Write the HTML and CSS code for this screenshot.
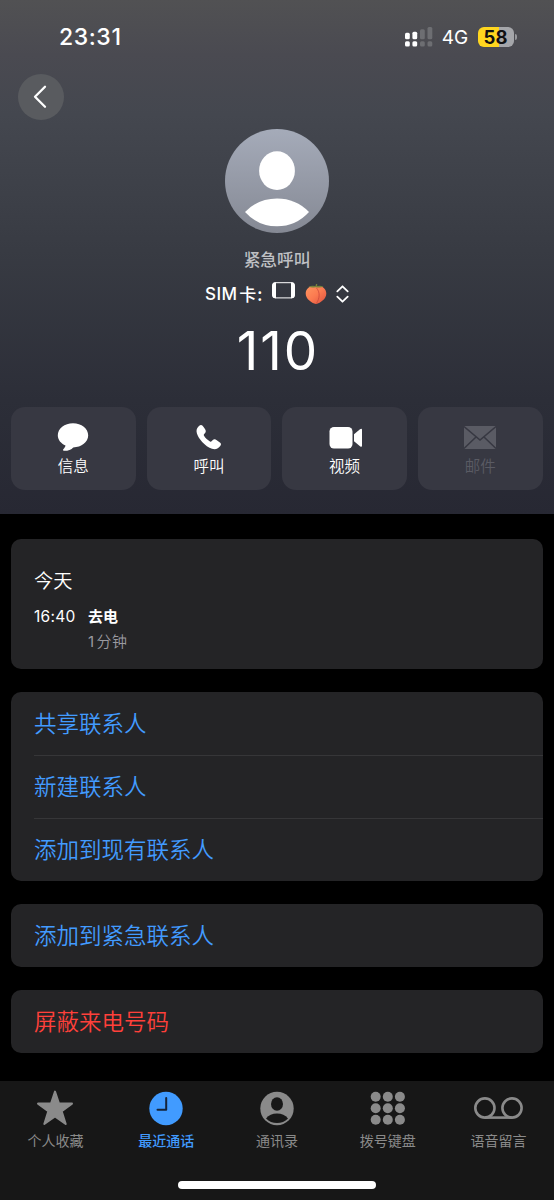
FILE: index.html
```html
<!DOCTYPE html>
<html lang="zh-CN">
<head>
<meta charset="utf-8">
<title>紧急呼叫</title>
<link rel="stylesheet" href="styles.css">
</head>
<body>
<div class="screen">
  <header class="hero">
    <div class="status">
      <span class="clock">23:31</span>
      <div class="status-right">
        <svg class="signal" width="28" height="20" viewBox="0 0 28 20">
          <g fill="#fff"><rect x="0" y="5.8" width="4.8" height="6.4" rx="1.5"/><rect x="0" y="14.2" width="4.8" height="5.2" rx="1.5"/><rect x="7.4" y="4.8" width="4.8" height="7.4" rx="1.5"/><rect x="7.4" y="14.2" width="4.8" height="5.2" rx="1.5"/></g>
          <g fill="#6d6e72"><rect x="15" y="2.2" width="4.8" height="10" rx="1.5"/><rect x="15" y="14.2" width="4.8" height="5.2" rx="1.5"/><rect x="22.5" y="0" width="4.8" height="12.2" rx="1.5"/><rect x="22.5" y="14.2" width="4.8" height="5.2" rx="1.5"/></g>
        </svg>
        <span class="network">4G</span>
        <div class="battery"><span class="battery-level">58</span><i class="nub"></i></div>
      </div>
    </div>
    <div class="nav">
      <button class="back" aria-label="返回">
        <svg width="46" height="46" viewBox="0 0 46 46"><path d="M27 12.800 17 22.800l10 10" fill="none" stroke="#fff" stroke-width="2.300" stroke-linecap="round" stroke-linejoin="round"/></svg>
      </button>
    </div>
    <svg class="avatar" width="104" height="104" viewBox="0 0 104 104">
      <defs><linearGradient id="avatarFill" x1="0" y1="0" x2="0" y2="1"><stop offset="0" stop-color="#a5abb9"/><stop offset="1" stop-color="#858994"/></linearGradient></defs>
      <circle cx="52" cy="52" r="52" fill="url(#avatarFill)"/>
      <ellipse cx="52" cy="41.700" rx="17.900" ry="19.400" fill="#fff"/>
      <path d="M20 83Q33 69.500 52 69.500T84 83Q71 97.300 52 97.300T20 83Z" fill="#fff"/>
    </svg>
    <div class="name">紧急呼叫</div>
    <div class="sim">
      <span class="sim-latin">SIM</span><span class="sim-label">卡:</span>
      <svg class="sim-icon" width="23" height="17" viewBox="0 0 23 17"><rect x=".7" y=".7" width="21.600" height="15.200" rx="3" fill="none" stroke="#fff" stroke-width="1"/><path d="M4 0.200H3Q0 .4 0 4v8.500Q0 16 3 16.300H4ZM19 .2h1q3 .2 3 3.800v8.500q0 3.500-3 3.800H19Z" fill="#fff"/></svg>
      <svg class="peach" width="22" height="22" viewBox="0 0 22 22">
        <defs><linearGradient id="peachFill" x1="0" y1="0" x2="1" y2="1"><stop offset="0" stop-color="#ff9560"/><stop offset=".5" stop-color="#fb7a50"/><stop offset="1" stop-color="#dc503f"/></linearGradient></defs>
        <path d="M11 4C7 1.700 .7 4.500 .7 10.500c0 5.500 5.600 9.300 10.300 10.500 4.700-1.200 10.300-5 10.300-10.500C21.300 4.500 15 1.700 11 4Z" fill="url(#peachFill)"/>
        <path d="M11.500 5c3.500 4 3.600 10-.2 15.500" fill="none" stroke="#cc493b" stroke-width=".8"/>
        <path d="M10.500 4.200Q6.500 5 3.500 3.800 6.500 2 10.500 3.100L11 1h1.200v2.100Q15.500 2 18.500 3.800 15.500 5 12 4.400Z" fill="#77803c"/>
      </svg>
      <svg class="sort" width="13" height="18" viewBox="0 0 13 18"><path d="M1.300 6.300 6.500 1.300l5.200 5M1.300 11.700l5.200 5 5.200-5" fill="none" stroke="#fff" stroke-width="1.800" stroke-linecap="round" stroke-linejoin="round"/></svg>
    </div>
    <div class="number">110</div>
    <div class="actions">
      <div class="action">
        <svg width="32" height="30" viewBox="0 0 32 30"><path d="M16 1.200C24.500 1.200 31.200 6.500 31.200 13.300S24.500 25.400 16.200 25.400C14.500 27.500 11 28.800 7.600 28.800 6 28.800 5.500 28 6.500 27 7.500 26 8.300 25 8.500 23.600 4 21.500.8 18 .8 13.300.8 6.500 7.500 1.200 16 1.200Z" fill="#fff"/></svg>
        <span>信息</span>
      </div>
      <div class="action">
        <svg width="32" height="30" viewBox="0 0 32 30"><path d="M4.200 6.200C5.300 4.500 6.700 3.100 8 3c1.200 0 2 1.100 3.300 3 1.600 2.400 2 3.600.8 5l-1.100 1.300c-.4.500-.3 1 0 1.500 1.300 2.200 3.800 4.500 6 5.700.6.400 1.100.3 1.600-.2l1.200-1.200c1.300-1.300 2.700-.8 5 .8 2.100 1.400 3.300 2.200 3.200 3.400-.1 1.400-1.400 2.900-3.200 4-3.600 2.100-8.800.3-13.500-4.300C5.500 16.500 2 10 4.200 6.200Z" fill="#fff"/></svg>
        <span>呼叫</span>
      </div>
      <div class="action">
        <svg width="34" height="30" viewBox="0 0 34 30"><rect x="1.500" y="5" width="23" height="21.500" rx="4.500" fill="#fff"/><path d="M26 12.300 32 7.300Q34 6 34 8v15.500q0 2-2 .7l-6-5Z" fill="#fff"/></svg>
        <span>视频</span>
      </div>
      <div class="action action-off">
        <svg width="32" height="30" viewBox="0 0 32 30"><rect x="0" y="4" width="32" height="23" rx="1" fill="#5a5b64"/><path d="M0 4.500 16 18 32 4.500M0 26.500 12 15M32 26.500 20 15" fill="none" stroke="#373842" stroke-width="1.600"/></svg>
        <span>邮件</span>
      </div>
    </div>
  </header>

  <main class="content">
    <section class="card log">
      <h2>今天</h2>
      <div class="log-grid">
        <span class="log-time">16:40</span><span class="log-type">去电</span>
        <span class="log-length"><b>1</b>分钟</span>
      </div>
    </section>
    <section class="card list">
      <a class="item">共享联系人</a>
      <a class="item">新建联系人</a>
      <a class="item">添加到现有联系人</a>
    </section>
    <section class="card list"><a class="item">添加到紧急联系人</a></section>
    <section class="card list"><a class="item danger">屏蔽来电号码</a></section>
  </main>

  <footer class="footer">
    <nav class="tabs">
      <a class="tab"><svg width="38" height="36" viewBox="0 0 38 36"><path d="M19 1.600 23 13.500 36 13.600 25.700 21.300 29.700 34 19 26.400 8.300 34 12.300 21.300 2 13.600 15 13.500Z" fill="#8a8a8a" stroke="#8a8a8a" stroke-width="2" stroke-linejoin="round"/></svg><span>个人收藏</span></a>
      <a class="tab active"><svg width="34" height="36" viewBox="0 0 34 36"><circle cx="17" cy="18.500" r="16.700" fill="#419bff"/><path d="M17.200 8V19.700H8.500" fill="none" stroke="#15243a" stroke-width="2" stroke-linecap="round" stroke-linejoin="round"/></svg><span>最近通话</span></a>
      <a class="tab"><svg width="34" height="36" viewBox="0 0 34 36"><circle cx="17" cy="18.500" r="16.700" fill="#8a8a8a"/><ellipse cx="17" cy="14" rx="6" ry="6.700" fill="#171717"/><path d="M6 28.500Q10 23.500 17 23.500T28 28.500Q23.500 33 17 33T6 28.500Z" fill="#171717"/></svg><span>通讯录</span></a>
      <a class="tab"><svg width="36" height="36" viewBox="0 0 36 36"><g fill="#8a8a8a"><circle cx="5.700" cy="6.800" r="5"/><circle cx="17.800" cy="6.800" r="5"/><circle cx="29.900" cy="6.800" r="5"/><circle cx="5.700" cy="18.300" r="5"/><circle cx="17.800" cy="18.300" r="5"/><circle cx="29.900" cy="18.300" r="5"/><circle cx="5.700" cy="29.800" r="5"/><circle cx="17.800" cy="29.800" r="5"/><circle cx="29.900" cy="29.800" r="5"/></g></svg><span>拨号键盘</span></a>
      <a class="tab"><svg width="50" height="36" viewBox="0 0 50 36"><g fill="none" stroke="#8a8a8a" stroke-width="2.600"><circle cx="10.900" cy="18" r="9.600"/><circle cx="38" cy="18" r="9.600"/><path d="M10.900 27.600h27"/></g></svg><span>语音留言</span></a>
    </nav>
    <div class="home-bar"></div>
  </footer>
</div>
</body>
</html>
```
FILE: styles.css
```css
* { box-sizing: border-box; }
body {
  margin: 0;
  background: #000;
  color: #fff;
  font-family: Inter, "Noto Sans CJK SC", sans-serif;
}
svg { display: block; flex: none; }
.screen {
  width: 554px;
  height: 1200px;
  display: flex;
  flex-direction: column;
  overflow: hidden;
}

/* Header */
.hero {
  height: 514px;
  flex: none;
  display: flex;
  flex-direction: column;
  align-items: center;
  background: linear-gradient(#515153 0, #4a4a51 55px, #44474f 115px, #383b43 250px, #2c2e38 400px, #272833 514px);
}
.status {
  width: 100%;
  height: 74px;
  padding: 0 40.500px 0 59px;
  display: flex;
  align-items: center;
  justify-content: space-between;
}
.clock { font-size: 23px; font-weight: 550; line-height: 28px; letter-spacing: .6px; }
.status-right { display: flex; align-items: center; }
.network { font-size: 19px; line-height: 24px; margin: 2px 9px 0; letter-spacing: .2px; }
.battery {
  width: 36px;
  height: 20px;
  border-radius: 6px;
  background: linear-gradient(90deg, #ffd61f 58%, #a5a6aa 58%);
  color: #111;
  position: relative;
}
.battery-level { display: block; text-align: center; font-size: 18.500px; font-weight: 650; line-height: 20px; }
.nub {
  position: absolute;
  left: 37px;
  top: 7px;
  width: 2px;
  height: 6px;
  border-radius: 0 2px 2px 0;
  background: #97989c;
}
.nav { width: 100%; height: 55px; padding-left: 18px; }
.back {
  display: block;
  width: 46px;
  height: 46px;
  padding: 0;
  border: 0;
  border-radius: 50%;
  background: #595b5f;
}
.name { margin-top: 15px; font-size: 16.700px; line-height: 24px; font-weight: 500; color: #bfc0c4; }
.sim { height: 34px; margin-top: 5px; display: flex; align-items: center; }
.sim-latin { font-size: 17px; font-weight: 550; line-height: 24px; letter-spacing: .4px; }
.sim-label { font-family: "Noto Sans CJK SC", sans-serif; font-size: 17px; font-weight: 500; line-height: 24px; margin: -1px 0 0 2px; letter-spacing: .8px; }
.sim-icon { margin: -7px 0 0 9px; }
.peach { margin-left: 10px; }
.sort { margin-left: 9px; }
.number { margin-top: 8px; font-size: 53px; line-height: 64px; letter-spacing: 2px; padding-left: 2px; }
.actions { width: 100%; margin-top: 24px; padding: 0 11.500px 0 11px; display: flex; gap: 11px; }
.action {
  flex: 1;
  height: 83px;
  padding-top: 15px;
  display: flex;
  flex-direction: column;
  align-items: center;
  border-radius: 14px;
  background: #373842;
}
.action span { margin-top: 3px; font-size: 15.500px; line-height: 24px; font-weight: 350; }
.action-off span { color: #5a5b64; }

/* Cards */
.content {
  flex: 1;
  padding: 24.500px 11.500px 0 11px;
  display: flex;
  flex-direction: column;
  gap: 23px;
}
.card { flex: none; border-radius: 10px; background: #242426; overflow: hidden; }
.log { height: 130.800px; padding: 27px 23px 0; }
.log h2 { margin: 0; font-size: 19.200px; font-weight: 350; line-height: 30px; }
.log-grid {
  margin-top: 8px;
  display: grid;
  grid-template-columns: 54px 1fr;
  line-height: 25px;
  font-size: 15px;
}
.log-time { font-size: 15.500px; letter-spacing: .3px; }
.log-type { font-weight: 700; }
.log-length { grid-column: 2; color: #9a9aa0; letter-spacing: .4px; font-weight: 350; }
.log-length b { font-weight: 400; margin-right: 2px; }
.list { padding-left: 23px; }
.item {
  display: block;
  height: 62.900px;
  font-size: 22.500px;
  font-weight: 350;
  line-height: 64px;
  color: #429bff;
}
.item + .item { border-top: 1px solid #363638; line-height: 62px; }
.danger { color: #ff403a; }

/* Tab bar */
.footer { height: 119.500px; flex: none; background: #171717; display: flex; flex-direction: column; align-items: center; }
.tabs { width: 100%; height: 100.500px; display: flex; }
.tab {
  flex: 1;
  padding-top: 9.500px;
  display: flex;
  flex-direction: column;
  align-items: center;
  color: #8a8a8a;
}
.tab span { margin-top: 3.500px; font-size: 14px; line-height: 22px; }
.active { color: #419bff; }
.active span { font-weight: 500; }
.home-bar { width: 198px; height: 8px; border-radius: 4px; background: #fff; }
```
